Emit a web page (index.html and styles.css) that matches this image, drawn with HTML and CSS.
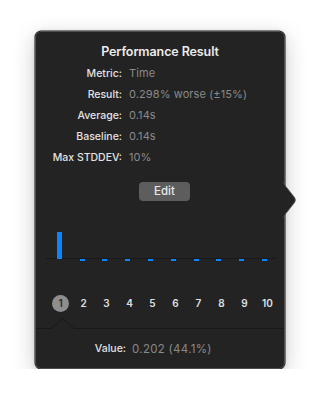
FILE: index.html
```html
<!DOCTYPE html>
<html>
<head>
<meta charset="utf-8">
<link rel="stylesheet" href="styles.css">
</head>
<body>
<div class="popover">
  <h1 class="title">Performance Result</h1>
  <div class="info">
    <span class="lbl">Metric:</span><span class="val">Time</span>
    <span class="lbl">Result:</span><span class="val">0.298% worse (±15%)</span>
    <span class="lbl">Average:</span><span class="val">0.14s</span>
    <span class="lbl">Baseline:</span><span class="val">0.14s</span>
    <span class="lbl">Max STDDEV:</span><span class="val">10%</span>
  </div>
  <div class="actions"><button class="edit">Edit</button></div>
  <div class="chart">
    <div class="col"><span class="bar up" style="height:27px"></span></div>
    <div class="col"><span class="bar down"></span></div>
    <div class="col"><span class="bar down"></span></div>
    <div class="col"><span class="bar down"></span></div>
    <div class="col"><span class="bar down"></span></div>
    <div class="col"><span class="bar down"></span></div>
    <div class="col"><span class="bar down"></span></div>
    <div class="col"><span class="bar down"></span></div>
    <div class="col"><span class="bar down"></span></div>
    <div class="col"><span class="bar down"></span></div>
  </div>
  <div class="tabs">
    <span class="tab active">1</span><span class="tab">2</span><span class="tab">3</span><span class="tab">4</span><span class="tab">5</span><span class="tab">6</span><span class="tab">7</span><span class="tab">8</span><span class="tab">9</span><span class="tab">10</span>
  </div>
  <svg class="sep" width="248" height="12" viewBox="0 0 248 12"><path d="M0 11.5 H15 L26.5 1.5 L38 11.5 H248" fill="none" stroke="#191919" stroke-width="1"/></svg>
  <div class="value"><span class="lbl">Value:</span><span class="val">0.202 (44.1%)</span></div>
  <svg class="arrow" width="14" height="36" viewBox="0 0 14 36"><path d="M0 0 C1 2 2 4 4 6 L11.5 15.5 C12.5 17 12.5 19 11.5 20.5 L4 30 C2 32 1 34 0 36 Z" fill="#232323"/><path d="M0 0 C1 2 2 4 4 6 L11.5 15.5 C12.5 17 12.5 19 11.5 20.5 L4 30 C2 32 1 34 0 36" fill="none" stroke="#4a4a4a" stroke-width="0.8"/></svg>
</div>
</body>
</html>
```
FILE: styles.css
```css
html, body {
  margin: 0;
  padding: 0;
  background: #ffffff;
}
body {
  padding: 31px 0 0 35px;
  font-family: Inter, "Liberation Sans", sans-serif;
}
.popover {
  position: relative;
  box-sizing: border-box;
  width: 250px;
  height: 338px;
  background: #232323;
  border: 1px solid #4f4f4f;
  border-radius: 6px;
  box-shadow: 0 0 0 0.5px #1a1a1a, 0 6px 22px rgba(0,0,0,0.22), 0 1px 5px rgba(0,0,0,0.12);
  padding-top: 12px;
}
.title {
  margin: 0;
  text-align: center;
  font-size: 12.5px;
  line-height: 16px;
  font-weight: 600;
  color: #ececec;
  letter-spacing: -0.1px;
}
.info {
  display: grid;
  grid-template-columns: 86px auto;
  column-gap: 7px;
  margin-top: 3px;
  font-size: 10.5px;
  line-height: 21px;
}
.lbl {
  text-align: right;
  color: #e2e2e2;
  font-weight: 500;
}
.val {
  color: #8a8a8a;
  font-size: 11px;
  letter-spacing: 0.1px;
}
.actions {
  display: flex;
  justify-content: center;
  margin-top: 14px;
  padding-left: 9px;
}
.edit {
  width: 51px;
  height: 19px;
  border: none;
  border-radius: 4px;
  background: #5d5d5d;
  color: #e8e8e8;
  font-family: inherit;
  font-size: 11.5px;
  font-weight: 500;
  padding: 0;
  line-height: 19px;
}
.chart {
  position: relative;
  display: flex;
  height: 30px;
  margin: 31px 8px 0 10px;
  padding-left: 2px;
}
.chart::after {
  content: "";
  position: absolute;
  left: 0;
  right: 0;
  top: 26px;
  height: 1px;
  background: #181818;
}
.col {
  width: 23px;
  display: flex;
  flex-direction: column;
  align-items: center;
}
.bar {
  display: block;
  width: 5px;
  background: #0a84ff;
  position: relative;
  z-index: 1;
}
.bar.down {
  margin-top: 27px;
  height: 2px;
}
.tabs {
  display: flex;
  margin: 33px 0 0 13px;
  height: 18px;
}
.tab {
  width: 23px;
  text-align: center;
  font-size: 10px;
  font-weight: 600;
  line-height: 17px;
  color: #e0e0e0;
}
.tab.active {
  width: 17px;
  height: 17px;
  margin: 0 3px;
  border-radius: 50%;
  background: #8e8e8e;
  color: #2a2a2a;
}
.sep {
  display: block;
  margin-top: 4px;
}
.value {
  display: grid;
  grid-template-columns: 90px auto;
  column-gap: 6px;
  margin-top: 11px;
  font-size: 10.5px;
  line-height: 18px;
}
.value .val {
  font-size: 11.5px;
  letter-spacing: 0.3px;
}
.arrow {
  position: absolute;
  right: -13px;
  top: 150px;
}
```
